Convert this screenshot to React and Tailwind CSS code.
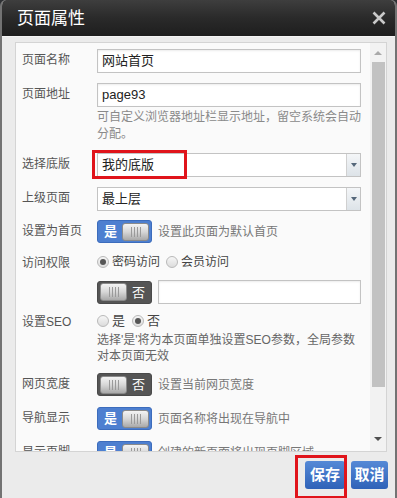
import React from "react";

const FONT = { fontFamily: '"Liberation Sans", "Noto Sans CJK SC", sans-serif' };

const Knob = () => (
  <div className="w-[27px] h-[18px] rounded-[3px] bg-gradient-to-b from-[#f4f4f4] via-[#d6d6d6] to-[#a9a9a9] border border-[#8a8a8a] flex items-center justify-center gap-[2px]">
    <span className="w-px h-[10px] bg-[#9a9a9a]" />
    <span className="w-px h-[10px] bg-[#9a9a9a]" />
    <span className="w-px h-[10px] bg-[#9a9a9a]" />
    <span className="w-px h-[10px] bg-[#9a9a9a]" />
  </div>
);

const Toggle = ({ on }) =>
  on ? (
    <div className="w-[55px] h-[23px] shrink-0 rounded-[3px] bg-[#4d7fd0] border border-[#3c6cbc] flex items-center justify-between pl-[6px] pr-[2px]">
      <span className="text-white text-[13px] font-bold leading-none">是</span>
      <Knob />
    </div>
  ) : (
    <div className="w-[55px] h-[23px] shrink-0 rounded-[3px] bg-[#555555] border border-[#4a4a4a] flex items-center justify-between pl-[2px] pr-[6px]">
      <Knob />
      <span className="text-white text-[13px] leading-none">否</span>
    </div>
  );

const Radio = ({ checked }) => (
  <span className="w-[12px] h-[12px] rounded-full border border-[#b9b9b9] bg-gradient-to-b from-[#f6f6f6] to-[#dcdcdc] flex items-center justify-center shrink-0">
    {checked && <span className="w-[6px] h-[6px] rounded-full bg-[#555]" />}
  </span>
);

const Row = ({ label, className = "", children }) => (
  <div className={"flex items-start " + className}>
    <div className="w-[75px] shrink-0 text-[12px] leading-[18px] pt-[2px] text-[#555]">{label}</div>
    <div className="flex-1 min-w-0">{children}</div>
  </div>
);

const Input = ({ value, className = "" }) => (
  <div className={"h-[24px] bg-white border border-[#c3c3c3] shadow-[inset_0_1px_2px_rgba(0,0,0,0.08)] flex items-center px-[4px] text-[13px] text-[#222] " + className}>
    {value}
  </div>
);

const Select = ({ value, marked }) => (
  <div className="relative h-[24px] bg-white border border-[#c3c3c3] flex items-center text-[13px] text-[#222]">
    <span className="flex-1 pl-[4px]">{value}</span>
    <div className="w-[14px] h-full border-l border-[#d0d0d0] bg-gradient-to-b from-[#f4f6f8] to-[#dde3e8] flex items-center justify-center">
      <span className="w-0 h-0 border-l-[3px] border-r-[3px] border-t-[4px] border-l-transparent border-r-transparent border-t-[#55677a]" />
    </div>
    {marked && (
      <div className="absolute left-[-6px] top-[-4px] w-[95px] h-[29px] border-[3px] border-[#e0141b]" />
    )}
  </div>
);

export default function App() {
  return (
    <div className="w-[397px] h-[498px] bg-[#2e3033] text-[#555]" style={FONT}>
      <div className="h-full flex flex-col rounded-t-[6px] overflow-hidden border-x-2 border-[#737373] bg-[#ebebeb]">
        <div className="h-[37px] shrink-0 bg-gradient-to-b from-[#3e3e3e] via-[#2a2a2a] to-[#1e1e1e] border-b border-[#f5f5f5] flex items-center justify-between pl-[15px] pr-[9px]">
          <span className="text-white text-[17px] leading-none">页面属性</span>
          <svg width="14" height="14" viewBox="0 0 14 14">
            <path d="M1.5 1.5 L12.5 12.5 M12.5 1.5 L1.5 12.5" stroke="#c9c9c9" strokeWidth="2.6" />
          </svg>
        </div>

        <div className="pl-[13px] pr-[8px] pt-[5px]">
          <div className="h-[410px] flex border border-[#d4d4d4] bg-[#fafafa]">
            <div className="flex-1 overflow-hidden pl-[6px] pr-[9px] pt-[6px]">
              <Row label="页面名称">
                <Input value="网站首页" />
              </Row>
              <Row label="页面地址" className="mt-[10px]">
                <Input value="page93" />
                <p className="mt-[2px] text-[12px] leading-[17px] text-[#8a8a8a]">
                  可自定义浏览器地址栏显示地址，留空系统会自动分配。
                </p>
              </Row>
              <Row label="选择底版" className="mt-[10px]">
                <Select value="我的底版" marked />
              </Row>
              <Row label="上级页面" className="mt-[10px]">
                <Select value="最上层" />
              </Row>
              <Row label="设置为首页" className="mt-[9px]">
                <div className="flex items-center gap-[6px]">
                  <Toggle on />
                  <span className="text-[12px] text-[#777]">设置此页面为默认首页</span>
                </div>
              </Row>
              <Row label="访问权限" className="mt-[9px]">
                <div className="flex items-center h-[20px] text-[12px] text-[#444]">
                  <Radio checked />
                  <span className="ml-[3px]">密码访问</span>
                  <span className="ml-[6px]"><Radio /></span>
                  <span className="ml-[3px]">会员访问</span>
                </div>
              </Row>
              <Row label="" className="mt-[8px]">
                <div className="flex items-center gap-[6px]">
                  <Toggle />
                  <Input value="" className="flex-1" />
                </div>
              </Row>
              <Row label="设置SEO" className="mt-[7px]">
                <div className="flex items-center h-[20px] text-[13px] text-[#444]">
                  <Radio />
                  <span className="ml-[3px]">是</span>
                  <span className="ml-[7px]"><Radio checked /></span>
                  <span className="ml-[3px]">否</span>
                </div>
                <p className="mt-[1px] text-[12px] leading-[16px] text-[#666]">
                  选择'是'将为本页面单独设置SEO参数，全局参数对本页面无效
                </p>
              </Row>
              <Row label="网页宽度" className="mt-[9px]">
                <div className="flex items-center gap-[6px]">
                  <Toggle />
                  <span className="text-[12px] text-[#777]">设置当前网页宽度</span>
                </div>
              </Row>
              <Row label="导航显示" className="mt-[11px]">
                <div className="flex items-center gap-[6px]">
                  <Toggle on />
                  <span className="text-[12px] text-[#777]">页面名称将出现在导航中</span>
                </div>
              </Row>
              <Row label="显示页脚" className="mt-[11px]">
                <div className="flex items-center gap-[6px]">
                  <Toggle on />
                  <span className="text-[12px] text-[#777]">创建的新页面将出现页脚区域</span>
                </div>
              </Row>
            </div>

            <div className="w-[16px] shrink-0 bg-[#f2f2f2] flex flex-col items-center">
              <div className="h-[19px] flex items-center justify-center">
                <span className="w-0 h-0 border-l-[4px] border-r-[4px] border-b-[4px] border-l-transparent border-r-transparent border-b-[#a9a9a9]" />
              </div>
              <div className="w-[13px] h-[325px] bg-[#c2c2c2]" />
              <div className="flex-1" />
              <div className="h-[16px] flex items-start justify-center pt-[2px]">
                <span className="w-0 h-0 border-l-[4px] border-r-[4px] border-t-[4px] border-l-transparent border-r-transparent border-t-[#505050]" />
              </div>
            </div>
          </div>
        </div>

        <div className="flex-1 flex justify-end items-start pt-[9px] pr-[7px] gap-[6px]">
          <div className="relative">
            <button className="w-[40px] h-[28px] rounded-[3px] bg-gradient-to-b from-[#5589d6] to-[#2f62b8] text-white text-[15px] font-bold">
              保存
            </button>
            <div className="absolute left-[-10px] top-[-6px] w-[52px] h-[44px] border-[3px] border-[#e0141b]" />
          </div>
          <button className="w-[37px] h-[28px] rounded-[3px] bg-gradient-to-b from-[#5589d6] to-[#2f62b8] text-white text-[15px] font-bold">
            取消
          </button>
        </div>
      </div>
    </div>
  );
}
